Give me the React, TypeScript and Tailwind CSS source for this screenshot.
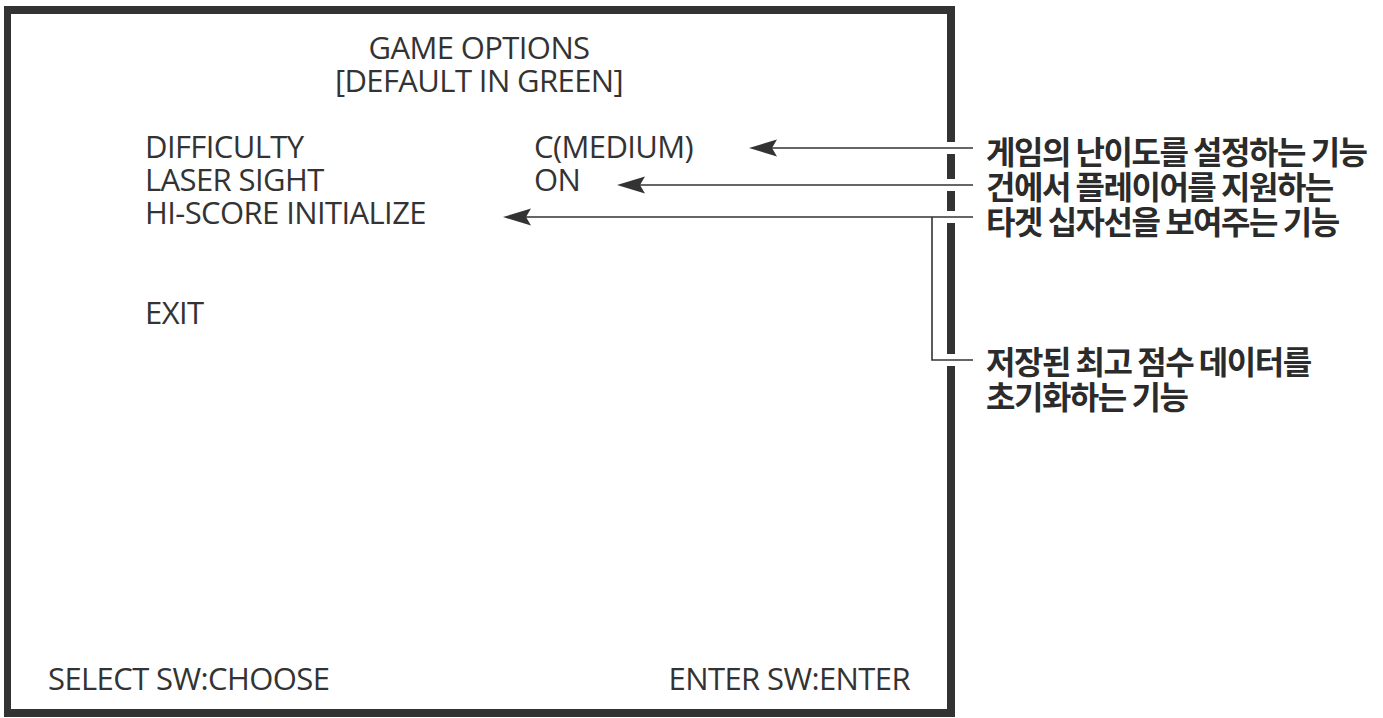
import React from 'react'

const options = [
  { label: 'DIFFICULTY', value: 'C(MEDIUM)' },
  { label: 'LASER SIGHT', value: 'ON' },
  { label: 'HI-SCORE INITIALIZE', value: '' },
]

const notes = ['게임의 난이도를 설정하는 기능', '건에서 플레이어를 지원하는', '타겟 십자선을 보여주는 기능']

function Arrow({ tip, y }: { tip: number; y: number }) {
  return (
    <>
      <line x1={tip + 20} y1={y} x2={973} y2={y} stroke="#333" strokeWidth={1.6} />
      <path d={`M${tip},${y} L${tip + 28},${y - 8.5} L${tip + 23},${y} L${tip + 28},${y + 8.5} Z`} fill="#333" />
    </>
  )
}

export default function App() {
  return (
    <div
      className="relative w-[1383px] h-[718px] bg-white overflow-hidden flex items-start pt-[6px] pl-[4px] text-[#333]"
      style={{ fontFamily: '"Open Sans", "Liberation Sans", sans-serif' }}
    >
      {/* monitor frame */}
      <div className="w-[951px] h-[711px] shrink-0 border-[8px] border-l-[7px] border-[#333] flex flex-col text-[31px] leading-[33px] tracking-[-0.6px]">
        <div className="mt-[17px] text-center">
          <div>GAME OPTIONS</div>
          <div>[DEFAULT IN GREEN]</div>
        </div>

        <div className="mt-[33px] pl-[134px] grid grid-cols-[389px_auto]">
          {options.map((o) => (
            <React.Fragment key={o.label}>
              <div>{o.label}</div>
              <div>{o.value}</div>
            </React.Fragment>
          ))}
        </div>

        <div className="mt-[67px] pl-[134px]">EXIT</div>

        <div className="flex-1" />

        <div className="flex justify-between px-[37px] pb-[14px]">
          <span>SELECT SW:CHOOSE</span>
          <span>ENTER SW:ENTER</span>
        </div>
      </div>

      {/* annotations */}
      <div
        className="ml-[31px] pt-[127px] text-[32px] leading-[35px] font-bold tracking-[-1.5px] text-[#2b2b2b] whitespace-nowrap"
        style={{ fontFamily: '"Noto Sans CJK KR", "Noto Sans", sans-serif' }}
      >
        {notes.map((n) => (
          <div key={n}>{n}</div>
        ))}
        <div className="mt-[105px]">저장된 최고 점수 데이터를</div>
        <div>초기화하는 기능</div>
      </div>

      <svg className="absolute inset-0 pointer-events-none" width={1383} height={718}>
        {[148, 185, 217, 360].map((y) => (
          <rect key={y} x={945} y={y - 6} width={12} height={12} fill="#fff" />
        ))}
        <Arrow tip={749} y={148} />
        <Arrow tip={617} y={185} />
        <Arrow tip={503} y={217} />
        <path d="M932,217 L932,360 L973,360" fill="none" stroke="#333" strokeWidth={1.6} />
      </svg>
    </div>
  )
}
